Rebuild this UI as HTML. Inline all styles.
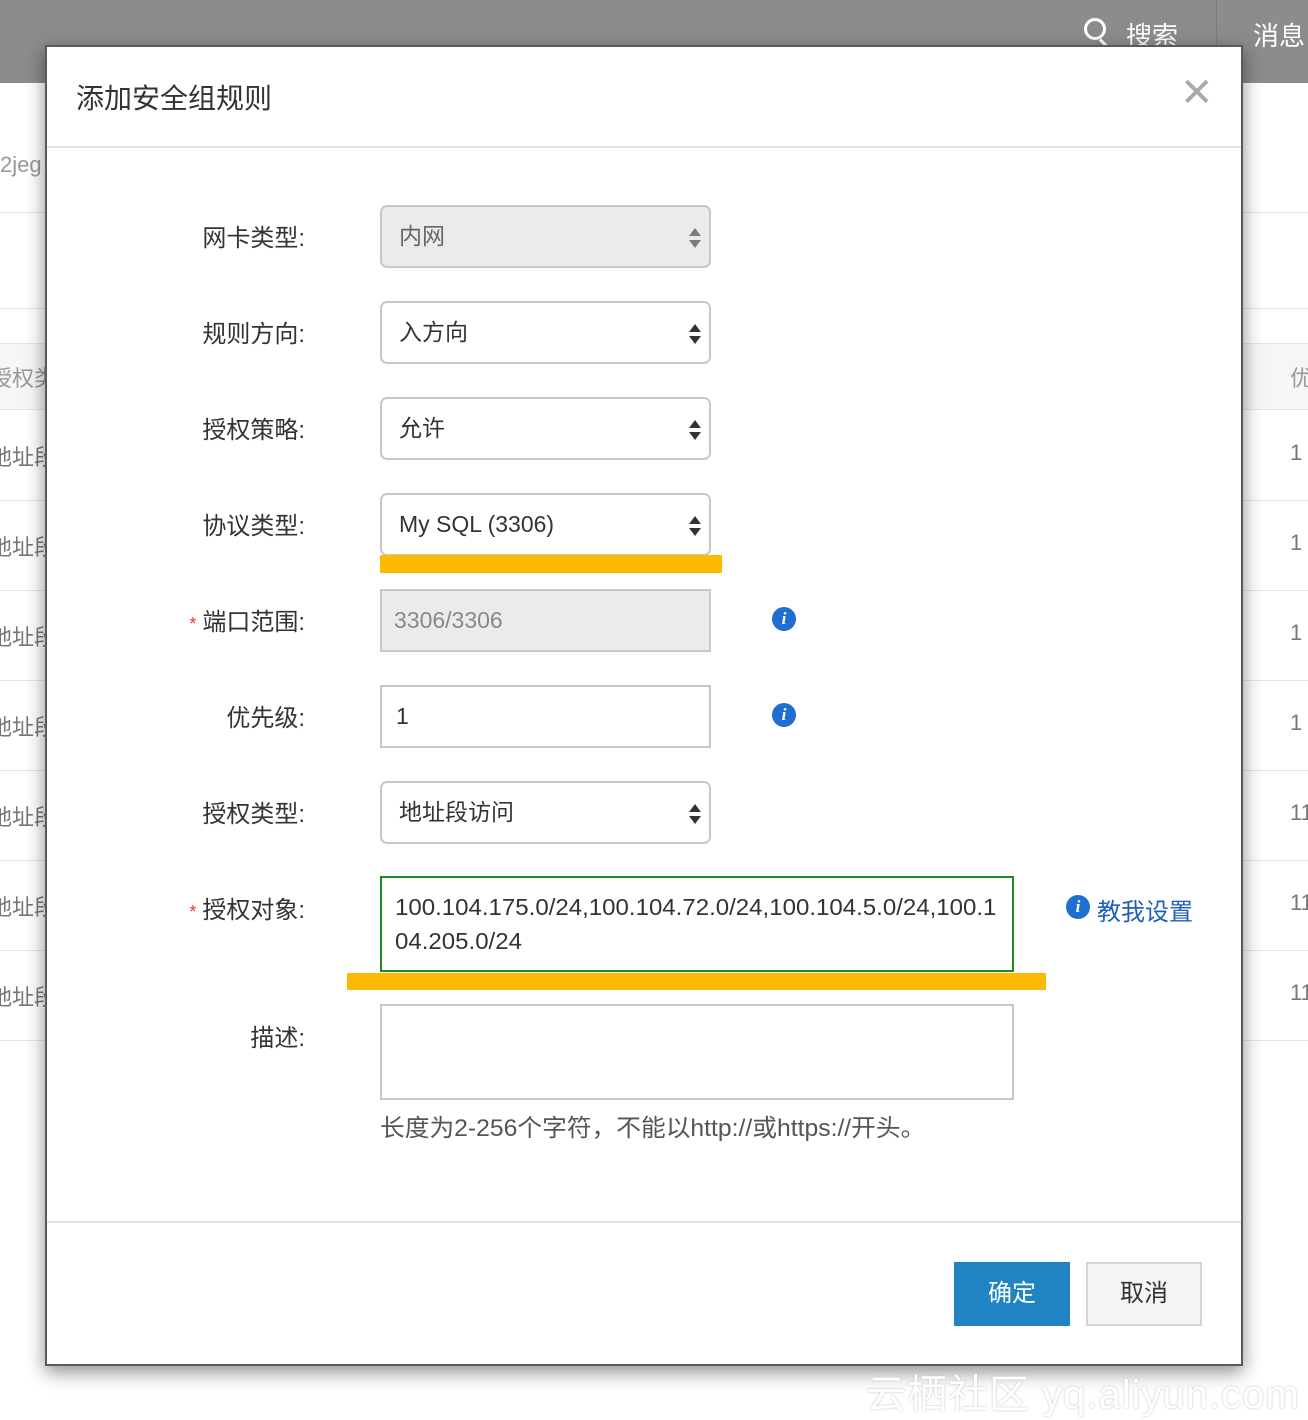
<!DOCTYPE html>
<html><head><meta charset="utf-8"><style>
*{margin:0;padding:0;box-sizing:border-box}
body{width:1308px;height:1418px;position:relative;overflow:hidden;background:#fff;font-family:"Liberation Sans","Noto Sans CJK SC",sans-serif;color:#333}
.a{position:absolute}
.top{left:0;top:0;width:1308px;height:83px;background:#8a8c8e}
.hl{height:1px;background:#e6e6e6}
.bg{color:#999;font-size:22px}
.modal{left:45px;top:45px;width:1198px;height:1321px;background:#fff;border:2px solid #5a5a5a;box-shadow:0 6px 18px rgba(0,0,0,.45)}
.lbl{font-size:24px;color:#333;text-align:right;width:210px;left:95px}
.inp{left:380px;width:331px;height:63px;border:2px solid #c8c8c8;font-size:23px;padding-left:17px;line-height:59px;color:#333}
.sel{border-radius:7px}
.arr{position:absolute;right:8px;top:21px;width:12px}
.arr:before{content:"";position:absolute;left:0;top:0;border-left:6px solid transparent;border-right:6px solid transparent;border-bottom:8px solid #333}
.arr:after{content:"";position:absolute;left:0;top:12px;border-left:6px solid transparent;border-right:6px solid transparent;border-top:8px solid #333}
.info{width:24px;height:24px;border-radius:50%;background:#1f6fd1;color:#fff;font:italic bold 17px "Liberation Serif",serif;text-align:center;line-height:24px}
.star{color:#e4393c;font-size:18px;position:relative;left:-6px}
.nar{display:inline-block;transform-origin:left;white-space:nowrap}
</style></head><body>
<div class="a top"></div>
<div class="a" style="left:1084px;top:18px;width:22px;height:22px;border:3px solid #fff;border-radius:50%"></div>
<div class="a" style="left:1102px;top:38px;width:3px;height:10px;background:#fff;transform:rotate(-45deg)"></div>
<div class="a" style="left:1126px;top:16px;color:#fff;font-size:26px">搜索</div>
<div class="a" style="left:1216px;top:0;width:1px;height:83px;background:#7c7e80"></div>
<div class="a" style="left:1253px;top:16px;color:#fff;font-size:26px">消息</div>
<div class="a bg" style="left:0;top:152px">2jeg</div>
<div class="a hl" style="left:0;top:212px;width:1308px"></div>
<div class="a hl" style="left:0;top:308px;width:1308px"></div>
<div class="a" style="left:0;top:343px;width:1308px;height:67px;background:#f4f6f8;border-top:1px solid #e6e6e6;border-bottom:1px solid #e6e6e6"></div>
<div class="a bg" style="left:-10px;top:361px">授权类</div>
<div class="a bg" style="left:1290px;top:361px">优</div>
<div class="a hl" style="left:0;top:500px;width:1308px"></div>
<div class="a hl" style="left:0;top:590px;width:1308px"></div>
<div class="a hl" style="left:0;top:680px;width:1308px"></div>
<div class="a hl" style="left:0;top:770px;width:1308px"></div>
<div class="a hl" style="left:0;top:860px;width:1308px"></div>
<div class="a hl" style="left:0;top:950px;width:1308px"></div>
<div class="a hl" style="left:0;top:1040px;width:1308px"></div>
<div class="a bg" style="left:-10px;top:440px;color:#777">地址段</div><div class="a bg" style="left:1290px;top:440px;color:#777">1</div>
<div class="a bg" style="left:-10px;top:530px;color:#777">地址段</div><div class="a bg" style="left:1290px;top:530px;color:#777">1</div>
<div class="a bg" style="left:-10px;top:620px;color:#777">地址段</div><div class="a bg" style="left:1290px;top:620px;color:#777">1</div>
<div class="a bg" style="left:-10px;top:710px;color:#777">地址段</div><div class="a bg" style="left:1290px;top:710px;color:#777">1</div>
<div class="a bg" style="left:-10px;top:800px;color:#777">地址段</div><div class="a bg" style="left:1290px;top:800px;color:#777">11</div>
<div class="a bg" style="left:-10px;top:890px;color:#777">地址段</div><div class="a bg" style="left:1290px;top:890px;color:#777">11</div>
<div class="a bg" style="left:-10px;top:980px;color:#777">地址段</div><div class="a bg" style="left:1290px;top:980px;color:#777">11</div>

<div class="a modal"></div>
<div class="a" style="left:76px;top:77px;font-size:28px;color:#333">添加安全组规则</div>
<div class="a" style="left:1180px;top:70px;font-size:40px;color:#aaa;font-weight:300">✕</div>
<div class="a" style="left:47px;top:146px;width:1194px;height:2px;background:#e2e2e2"></div>

<div class="a lbl" style="top:218px">网卡类型:</div>
<div class="a inp sel" style="top:205px;background:#ebebeb;color:#666">内网<span class="arr" style="opacity:.6"></span></div>
<div class="a lbl" style="top:314px">规则方向:</div>
<div class="a inp sel" style="top:301px">入方向<span class="arr"></span></div>
<div class="a lbl" style="top:410px">授权策略:</div>
<div class="a inp sel" style="top:397px">允许<span class="arr"></span></div>
<div class="a lbl" style="top:506px">协议类型:</div>
<div class="a inp sel" style="top:493px">My SQL (3306)<span class="arr"></span></div>
<div class="a" style="left:380px;top:555px;width:342px;height:18px;background:#fdba00"></div>
<div class="a lbl" style="top:602px"><span class="star">*</span>端口范围:</div>
<div class="a inp" style="top:589px;background:#ebebeb;color:#888;padding-left:12px">3306/3306</div>
<div class="a info" style="left:772px;top:607px">i</div>
<div class="a lbl" style="top:698px">优先级:</div>
<div class="a inp" style="top:685px;padding-left:14px">1</div>
<div class="a info" style="left:772px;top:703px">i</div>
<div class="a lbl" style="top:794px">授权类型:</div>
<div class="a inp sel" style="top:781px">地址段访问<span class="arr"></span></div>
<div class="a lbl" style="top:890px"><span class="star">*</span>授权对象:</div>
<div class="a" style="left:380px;top:876px;width:634px;height:96px;border:2px solid #1e8a1e;font-size:23px;line-height:34px;padding:12px 0 0 13px;color:#333"><span class="nar" style="transform:scaleX(1.045)">100.104.175.0/24,100.104.72.0/24,100.104.5.0/24,100.1</span><br><span class="nar" style="transform:scaleX(1.045)">04.205.0/24</span></div>
<div class="a info" style="left:1066px;top:895px">i</div>
<div class="a" style="left:1097px;top:892px;font-size:24px;color:#1f5fb8">教我设置</div>
<div class="a" style="left:347px;top:973px;width:699px;height:17px;background:#fdba00"></div>
<div class="a lbl" style="top:1018px">描述:</div>
<div class="a" style="left:380px;top:1004px;width:634px;height:96px;border:2px solid #c8c8c8"></div>
<div class="a" style="left:380px;top:1108px;font-size:24px;color:#555"><span class="nar" style="transform:scaleX(1.03)">长度为2-256个字符，不能以http://或https://开头。</span></div>

<div class="a" style="left:47px;top:1221px;width:1194px;height:2px;background:#e2e2e2"></div>
<div class="a" style="left:954px;top:1262px;width:116px;height:64px;background:#2083c2;color:#fff;font-size:24px;text-align:center;line-height:64px">确定</div>
<div class="a" style="left:1086px;top:1262px;width:116px;height:64px;background:#f4f4f4;border:2px solid #d6d6d6;color:#333;font-size:24px;text-align:center;line-height:60px">取消</div>
<div class="a" style="left:866px;top:1362px;font-size:40px;color:#fff;text-shadow:0 0 2px #bbb;letter-spacing:1px">云栖社区 yq.aliyun.com</div>
</body></html>
